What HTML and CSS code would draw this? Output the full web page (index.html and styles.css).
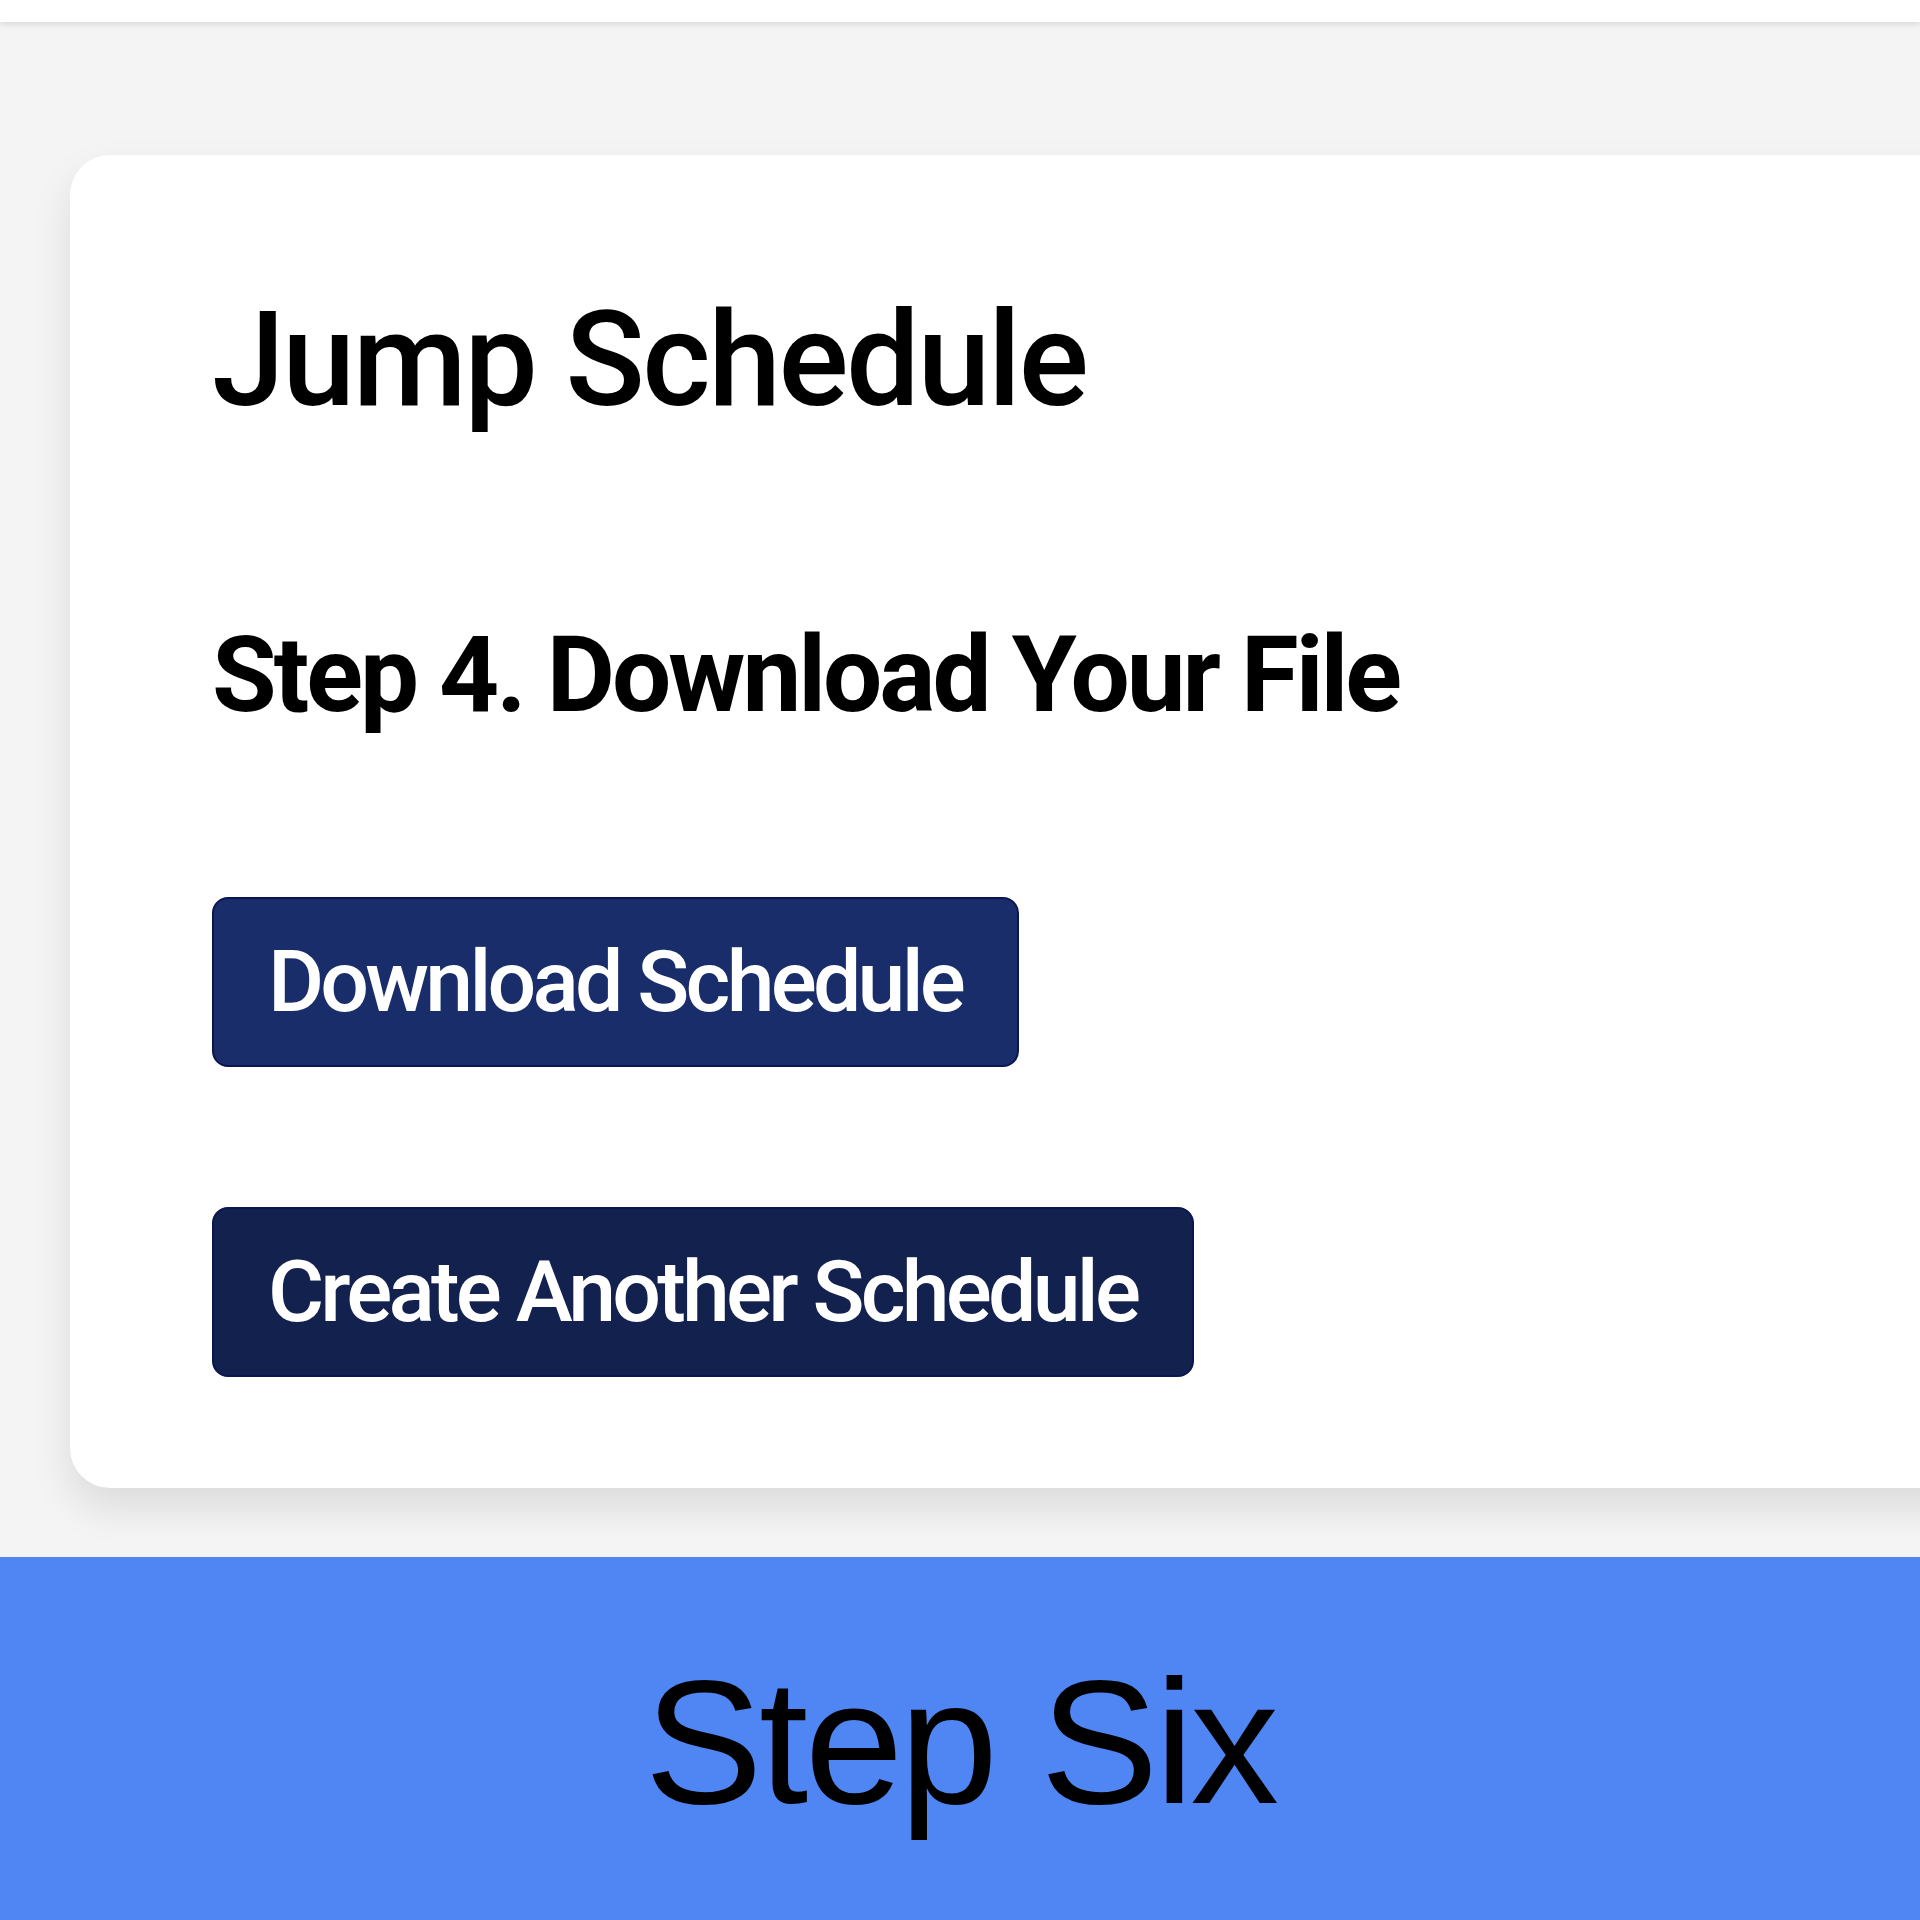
FILE: index.html
```html
<!DOCTYPE html>
<html lang="en">
<head>
<meta charset="utf-8">
<title>Jump Schedule</title>
<link rel="stylesheet" href="styles.css">
</head>
<body>
<header class="topbar"></header>
<main class="page">
  <section class="card">
    <h1 class="title">Jump Schedule</h1>
    <h2 class="step">Step 4. Download Your File</h2>
    <div class="actions">
      <button class="btn btn-download" type="button">Download Schedule</button>
      <button class="btn btn-create" type="button">Create Another Schedule</button>
    </div>
  </section>
</main>
<footer class="band">
  <p class="band-text">Step Six</p>
</footer>
</body>
</html>
```
FILE: styles.css
```css
html, body {
  margin: 0;
  padding: 0;
}
body {
  width: 1920px;
  height: 1920px;
  overflow: hidden;
  background: #f4f4f4;
  font-family: "Roboto", "Liberation Sans", sans-serif;
  color: #000;
}
.topbar {
  height: 22px;
  background: #ffffff;
  box-shadow: 0 2px 6px rgba(0, 0, 0, 0.12);
  position: relative;
  z-index: 1;
}
.page {
  padding: 133px 0 0 70px;
}
.card {
  width: 1960px;
  box-sizing: border-box;
  background: #ffffff;
  border-radius: 40px;
  box-shadow: 0 20px 40px rgba(0, 0, 0, 0.10);
  padding: 125px 0 111px 142px;
}
.title {
  margin: 0;
  font-size: 131px;
  line-height: 160px;
  font-weight: 500;
  letter-spacing: -2.5px;
}
.step {
  margin: 173px 0 0;
  font-size: 105px;
  line-height: 125px;
  font-weight: 700;
  letter-spacing: -3px;
}
.actions {
  margin-top: 159px;
  display: flex;
  flex-direction: column;
  align-items: flex-start;
  gap: 140px;
}
.btn {
  font-family: "Roboto", "Liberation Sans", sans-serif;
  font-size: 86px;
  line-height: 100px;
  font-weight: 500;
  color: #ffffff;
  padding: 33px 55px 33px 54px;
  border: 2px solid #0b1650;
  border-radius: 16px;
  letter-spacing: -3.8px;
  cursor: pointer;
}
.btn-download {
  background: #182d6a;
}
.btn-create {
  background: #13214f;
}
.band {
  margin-top: 69px;
  height: 400px;
  background: #4f86f4;
  padding-top: 85px;
  box-sizing: border-box;
}
.band-text {
  margin: 0;
  text-align: center;
  font-family: "Liberation Sans", Arial, sans-serif;
  font-size: 177px;
  line-height: 200px;
  letter-spacing: -3.5px;
  color: #000;
}
```
